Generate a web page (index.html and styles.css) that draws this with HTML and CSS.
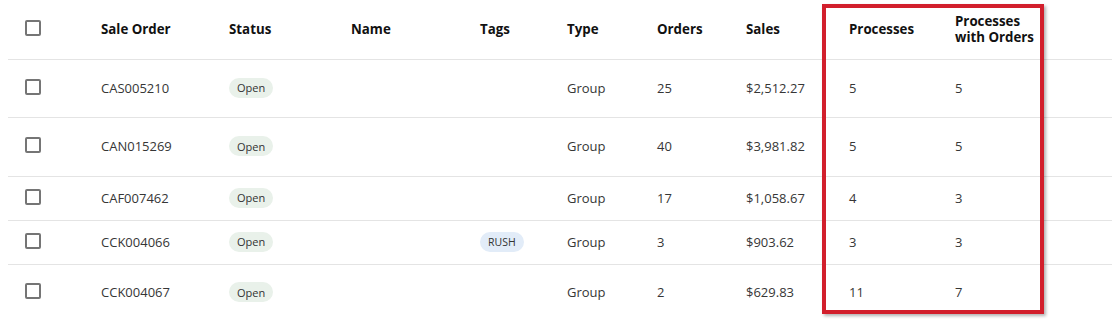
FILE: index.html
```html
<!DOCTYPE html>
<html lang="en">
<head>
<meta charset="utf-8">
<title>Sale Orders</title>
<link rel="stylesheet" href="styles.css">
</head>
<body>
<div class="page">
  <div class="table">
    <div class="row head">
      <div class="cell cb-cell"><span class="checkbox"></span></div>
      <div class="cell">Sale Order</div>
      <div class="cell">Status</div>
      <div class="cell">Name</div>
      <div class="cell">Tags</div>
      <div class="cell">Type</div>
      <div class="cell">Orders</div>
      <div class="cell">Sales</div>
      <div class="cell">Processes</div>
      <div class="cell">Processes<br>with Orders</div>
    </div>
    <div class="row tall">
      <div class="cell cb-cell"><span class="checkbox"></span></div>
      <div class="cell">CAS005210</div>
      <div class="cell"><span class="chip chip-open">Open</span></div>
      <div class="cell"></div>
      <div class="cell"></div>
      <div class="cell">Group</div>
      <div class="cell">25</div>
      <div class="cell">$2,512.27</div>
      <div class="cell">5</div>
      <div class="cell">5</div>
    </div>
    <div class="row tall2">
      <div class="cell cb-cell"><span class="checkbox"></span></div>
      <div class="cell">CAN015269</div>
      <div class="cell"><span class="chip chip-open">Open</span></div>
      <div class="cell"></div>
      <div class="cell"></div>
      <div class="cell">Group</div>
      <div class="cell">40</div>
      <div class="cell">$3,981.82</div>
      <div class="cell">5</div>
      <div class="cell">5</div>
    </div>
    <div class="row short">
      <div class="cell cb-cell"><span class="checkbox"></span></div>
      <div class="cell">CAF007462</div>
      <div class="cell"><span class="chip chip-open">Open</span></div>
      <div class="cell"></div>
      <div class="cell"></div>
      <div class="cell">Group</div>
      <div class="cell">17</div>
      <div class="cell">$1,058.67</div>
      <div class="cell">4</div>
      <div class="cell">3</div>
    </div>
    <div class="row short">
      <div class="cell cb-cell"><span class="checkbox"></span></div>
      <div class="cell">CCK004066</div>
      <div class="cell"><span class="chip chip-open">Open</span></div>
      <div class="cell"></div>
      <div class="cell"><span class="chip chip-tag">RUSH</span></div>
      <div class="cell">Group</div>
      <div class="cell">3</div>
      <div class="cell">$903.62</div>
      <div class="cell">3</div>
      <div class="cell">3</div>
    </div>
    <div class="row last">
      <div class="cell cb-cell"><span class="checkbox"></span></div>
      <div class="cell">CCK004067</div>
      <div class="cell"><span class="chip chip-open">Open</span></div>
      <div class="cell"></div>
      <div class="cell"></div>
      <div class="cell">Group</div>
      <div class="cell">2</div>
      <div class="cell">$629.83</div>
      <div class="cell">11</div>
      <div class="cell">7</div>
    </div>
  </div>
  <div class="highlight"></div>
</div>
</body>
</html>
```
FILE: styles.css
```css
html, body {
  margin: 0;
  padding: 0;
  background: #ffffff;
}
body {
  font-family: "Open Sans", "Liberation Sans", sans-serif;
  font-size: 13px;
  color: #363636;
  overflow: hidden;
}
.page {
  position: relative;
  padding: 0 8px;
  height: 320px;
}
.table {
  display: flex;
  flex-direction: column;
  width: 1104px;
}
.row {
  display: grid;
  grid-template-columns: 93px 128px 122px 129px 87px 90px 89px 103px 106px 157px;
  align-items: center;
  border-bottom: 1px solid #e4e4e4;
  box-sizing: border-box;
}
.head {
  height: 60px;
  font-weight: 700;
  font-size: 13.3px;
  color: #111111;
  line-height: 16px;
}
.tall { height: 58px; }
.tall2 { height: 59px; }
.short { height: 44px; }
.last { height: 56px; border-bottom: none; }
.cell {
  white-space: nowrap;
  padding-bottom: 2px;
}
.cb-cell {
  display: flex;
  padding-left: 17px;
  padding-bottom: 4px;
}
.checkbox {
  display: block;
  width: 16px;
  height: 16px;
  box-sizing: border-box;
  border: 2px solid #757575;
  border-radius: 2px;
}
.chip {
  display: inline-flex;
  align-items: center;
  height: 20px;
  padding: 0 8px;
  border-radius: 10px;
  font-size: 11px;
  color: #333333;
  vertical-align: middle;
}
.chip-open {
  background: #e9f1ea;
}
.chip-tag {
  background: #e2ecf8;
  font-size: 10.5px;
}
.highlight {
  position: absolute;
  left: 822px;
  top: 4px;
  width: 222px;
  height: 310px;
  box-sizing: border-box;
  border: 4px solid #d21f2c;
  box-shadow: 2px 2px 3px rgba(0, 0, 0, 0.3);
  pointer-events: none;
}
```
